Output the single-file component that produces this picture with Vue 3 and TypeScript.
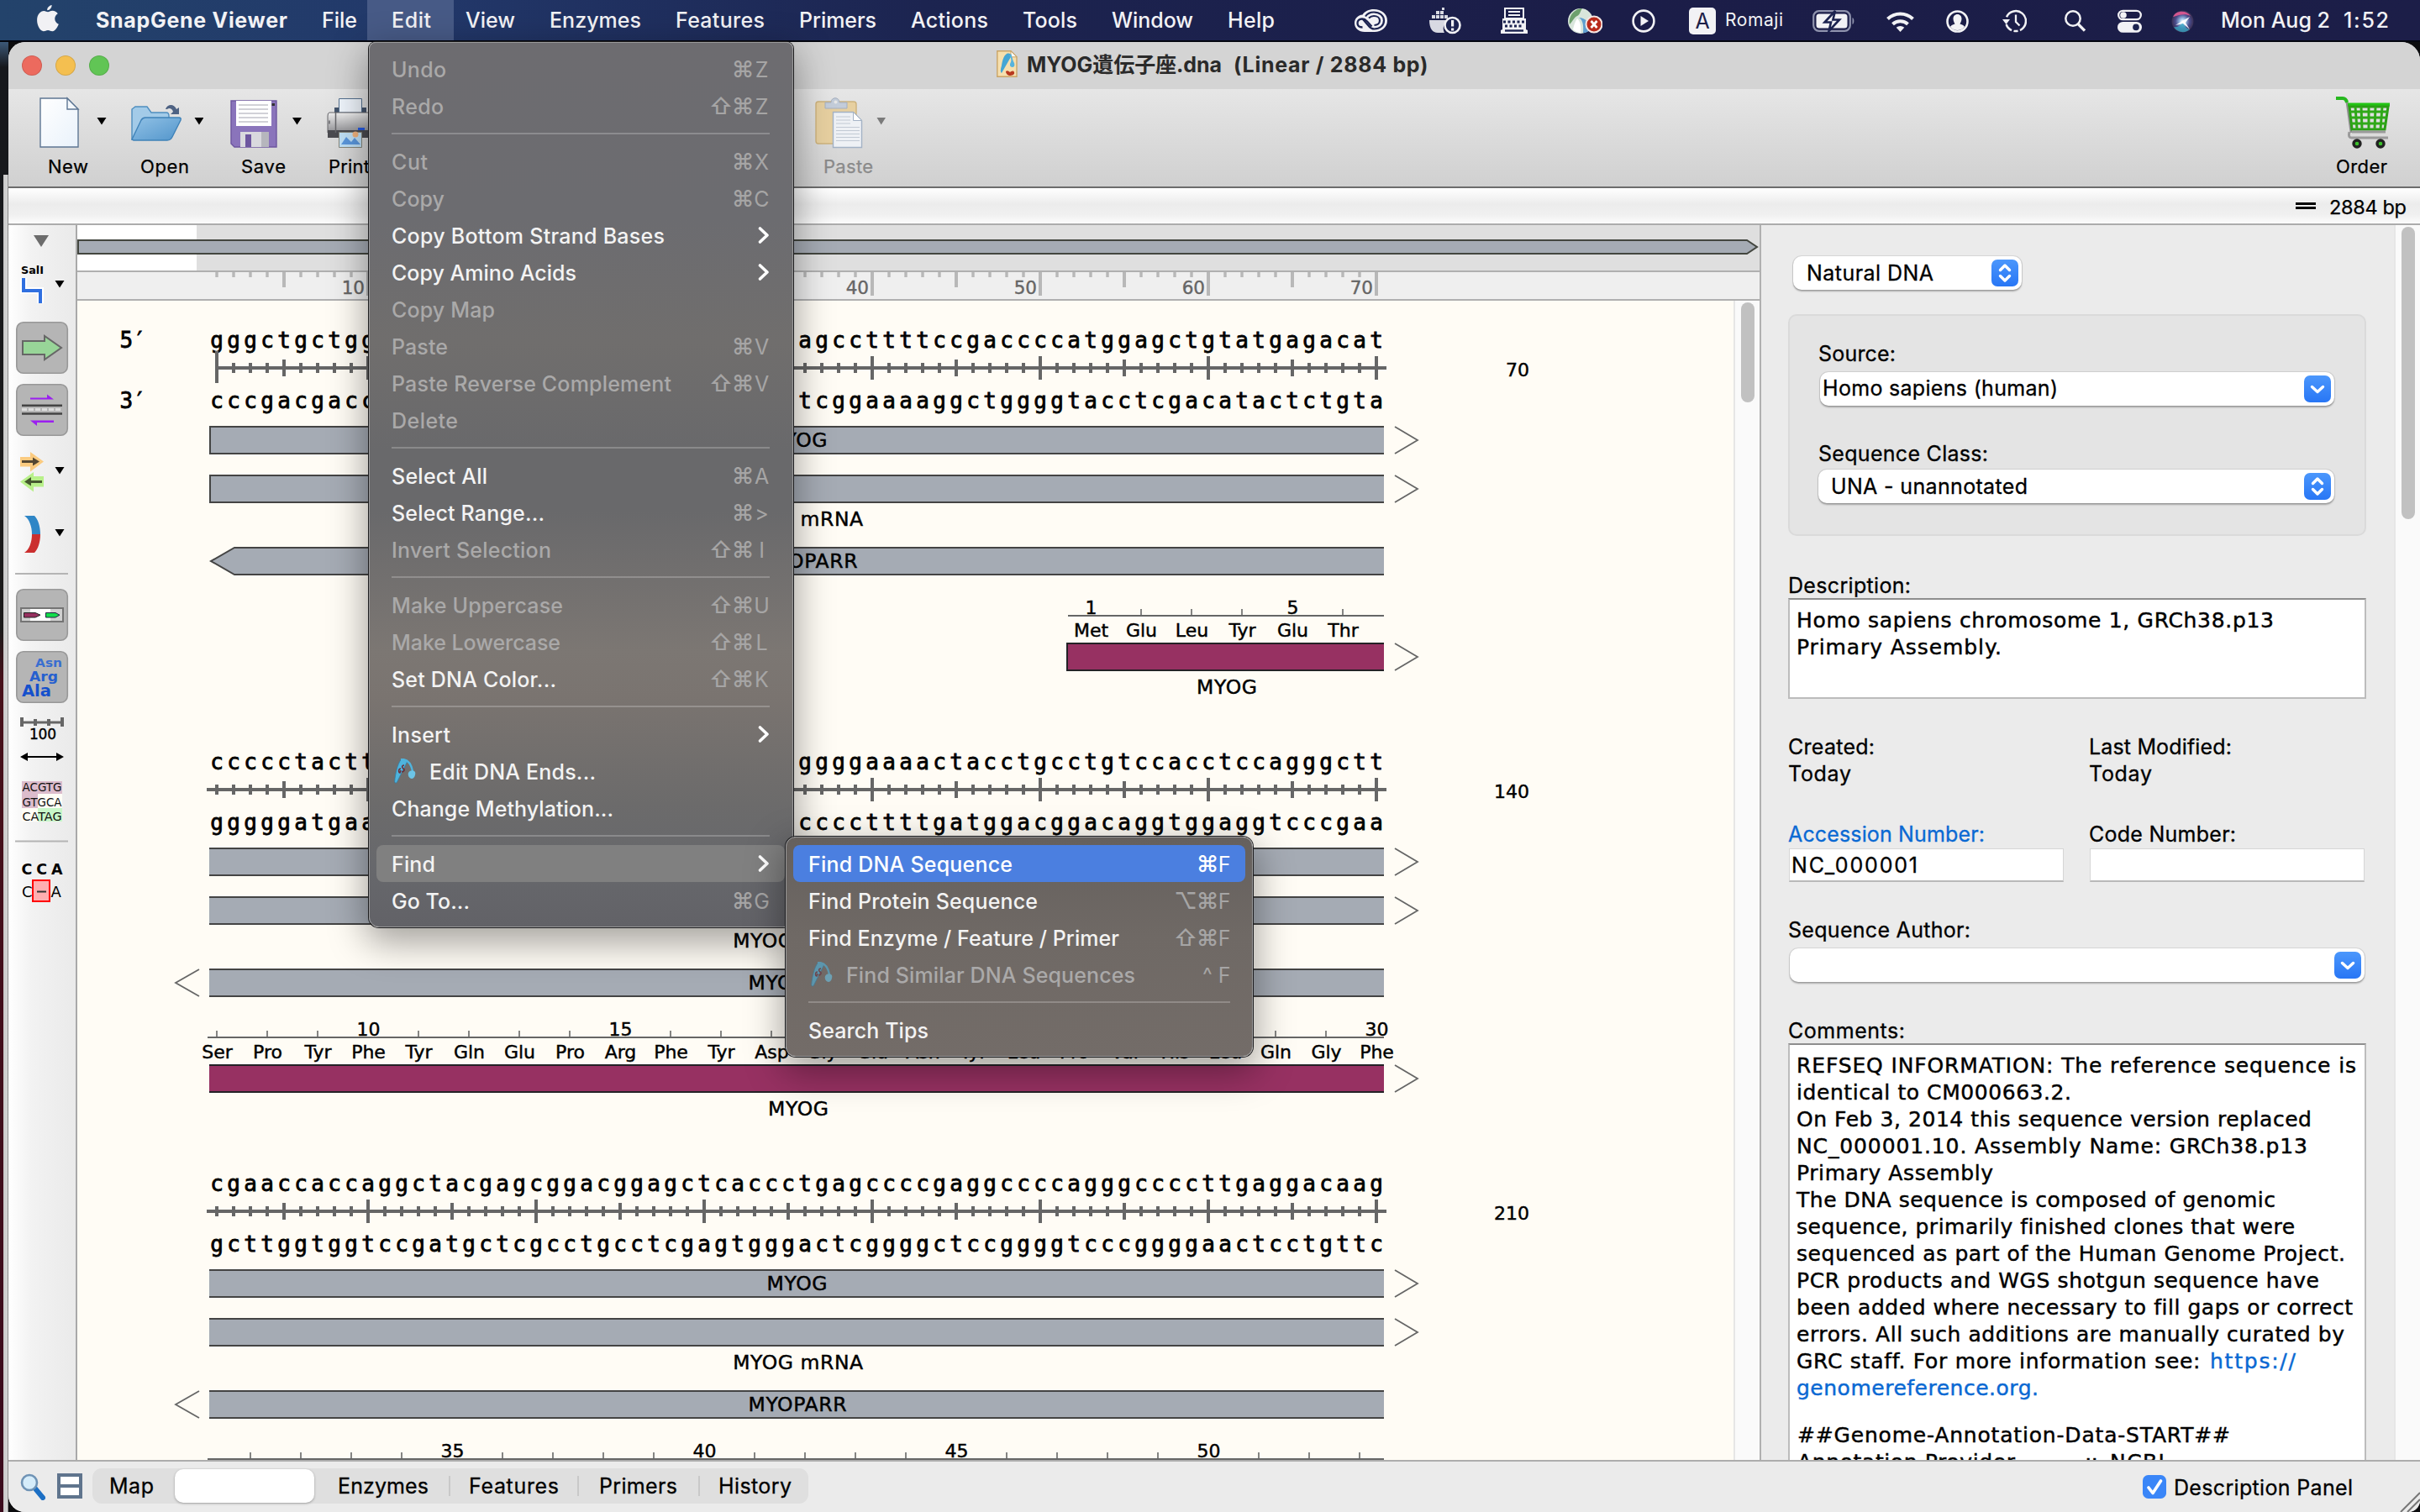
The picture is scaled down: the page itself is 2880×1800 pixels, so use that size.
<script setup lang="ts">
import type { Directive } from 'vue'

/* Spreads the letters of a label so that it spans the given width in px. */
const vFit: Directive<HTMLElement, number> = {
  mounted(el, { value }) {
    const range = document.createRange()
    range.selectNodeContents(el)
    const natural = range.getBoundingClientRect().width
    const count = Math.max(1, (el.textContent ?? '').trim().length - 1)
    const target = value + 2
    el.style.letterSpacing = `${((target - natural) / count).toFixed(3)}px`
    el.style.width = `${target}px`
  },
}

/* ---------- menu bar ---------- */
const menus = [
  { name: 'File', w: 40 }, { name: 'Edit', w: 45, open: true }, { name: 'View', w: 57 },
  { name: 'Enzymes', w: 107 }, { name: 'Features', w: 104 }, { name: 'Primers', w: 90 },
  { name: 'Actions', w: 90 }, { name: 'Tools', w: 63 }, { name: 'Window', w: 95 }, { name: 'Help', w: 54 },
]

interface Item {
  label?: string
  w?: number
  keys?: string[]
  off?: boolean
  sub?: boolean
  icon?: boolean
  active?: boolean
}
const sep: Item = {}
const editMenu: Item[] = [
  { label: 'Undo', w: 63, keys: ['⌘', 'Z'], off: true },
  { label: 'Redo', w: 60, keys: ['⇧', '⌘', 'Z'], off: true },
  sep,
  { label: 'Cut', w: 41, keys: ['⌘', 'X'], off: true },
  { label: 'Copy', w: 61, keys: ['⌘', 'C'], off: true },
  { label: 'Copy Bottom Strand Bases', w: 323, sub: true },
  { label: 'Copy Amino Acids', w: 218, sub: true },
  { label: 'Copy Map', w: 121, off: true },
  { label: 'Paste', w: 65, keys: ['⌘', 'V'], off: true },
  { label: 'Paste Reverse Complement', w: 331, keys: ['⇧', '⌘', 'V'], off: true },
  { label: 'Delete', w: 77, off: true },
  sep,
  { label: 'Select All', w: 112, keys: ['⌘', 'A'] },
  { label: 'Select Range...', w: 180, keys: ['⌘', '>'] },
  { label: 'Invert Selection', w: 188, keys: ['⇧', '⌘', 'I'], off: true },
  sep,
  { label: 'Make Uppercase', w: 202, keys: ['⇧', '⌘', 'U'], off: true },
  { label: 'Make Lowercase', w: 199, keys: ['⇧', '⌘', 'L'], off: true },
  { label: 'Set DNA Color...', w: 194, keys: ['⇧', '⌘', 'K'] },
  sep,
  { label: 'Insert', w: 68, sub: true },
  { label: 'Edit DNA Ends...', w: 196, icon: true },
  { label: 'Change Methylation...', w: 262 },
  sep,
  { label: 'Find', w: 50, sub: true, active: true },
  { label: 'Go To...', w: 91, keys: ['⌘', 'G'] },
]
const findMenu: Item[] = [
  { label: 'Find DNA Sequence', w: 241, keys: ['⌘', 'F'], active: true },
  { label: 'Find Protein Sequence', w: 271, keys: ['⌥', '⌘', 'F'] },
  { label: 'Find Enzyme / Feature / Primer', w: 368, keys: ['⇧', '⌘', 'F'] },
  { label: 'Find Similar DNA Sequences', w: 342, keys: ['^', 'F'], off: true, icon: true },
  sep,
  { label: 'Search Tips', w: 141 },
]

/* ---------- sequence map ---------- */
const PITCH = 20
const X0 = 258
const LEFT = 249
const RIGHT = 1647
const colX = (i: number) => X0 + PITCH * (i - 1)
const positions = Array.from({ length: 70 }, (_, i) => i + 1)
const pair: Record<string, string> = { a: 't', t: 'a', g: 'c', c: 'g' }
const complement = (s: string) => [...s].map((c) => pair[c]).join('')

interface Residue { x: number; name?: string; num?: number }
interface Row { top: string; end: number; first: boolean; aminoFrom: number; residues: Residue[]; aa: boolean }

const residues = (names: string[], firstNum: number, firstX: number): Residue[] =>
  names.map((name, i) => {
    const n = firstNum + i
    return { x: firstX + 60 * i, name, num: n === 1 || n % 5 === 0 ? n : undefined }
  })

const rows: Row[] = [
  {
    top: 'gggctgctgg' + 'gctggcgcagggcaagctgcagaca' + 'agccttttccgaccccatggagctgtatgagacat',
    end: 70, first: true, aminoFrom: 1271, aa: true,
    residues: residues(['Met', 'Glu', 'Leu', 'Tyr', 'Glu', 'Thr'], 1, 1298),
  },
  {
    top: 'ccccctactt' + 'cctgcagggcaggctcaggcagcgt' + 'ggggaaaactacctgcctgtccacctccagggctt',
    end: 140, first: false, aminoFrom: 247, aa: true,
    residues: residues(
      ['Ser', 'Pro', 'Tyr', 'Phe', 'Tyr', 'Gln', 'Glu', 'Pro', 'Arg', 'Phe', 'Tyr', 'Asp', 'Gly', 'Glu', 'Asn', 'Tyr',
        'Leu', 'Pro', 'Val', 'His', 'Leu', 'Gln', 'Gly', 'Phe'], 7, 258),
  },
  {
    top: 'cgaaccaccaggctacgagcggacggagctcaccctgagccccgaggccccagggccccttgaggacaag',
    end: 210, first: false, aminoFrom: 247, aa: false,
    residues: residues(Array(23).fill(''), 31, 298),
  },
]
const tickHalf = (i: number) => (i % 10 === 0 ? 14 : i % 5 === 0 ? 10 : 6)
const rulerTick = (i: number) => (i % 10 === 0 ? 28 : i % 5 === 0 ? 18 : 6)

/* ---------- description panel ---------- */
const comments = [
  { t: 'REFSEQ INFORMATION: The reference sequence is', w: 664 },
  { t: 'identical to CM000663.2.', w: 325 },
  { t: 'On Feb 3, 2014 this sequence version replaced', w: 611 },
  { t: 'NC_000001.10. Assembly Name: GRCh38.p13', w: 606 },
  { t: 'Primary Assembly', w: 232 },
  { t: 'The DNA sequence is composed of genomic', w: 568 },
  { t: 'sequence, primarily finished clones that were', w: 591 },
  { t: 'sequenced as part of the Human Genome Project.', w: 651 },
  { t: 'PCR products and WGS shotgun sequence have', w: 620 },
  { t: 'been added where necessary to fill gaps or correct', w: 660 },
  { t: 'errors. All such additions are manually curated by', w: 650 },
]
</script>

<template>
  <div class="screen">
    <!-- system menu bar -->
    <header class="menubar">
      <svg class="apple" width="26" height="32" viewBox="0 0 26 32">
        <path d="M17.6 0c.3 2.900-2.400 6.300-5.400 6.200C11.900 3.400 14.700.4 17.600 0zM13 8.300c1.400 0 2.800-1.500 5.500-1.500 2.500 0 4.900 1.200 6.300 3.400-5.200 3-4.500 10.400 1 12.600-1.100 3-3.900 8.400-7.400 8.400-2.200 0-2.900-1.300-5.300-1.300s-3.300 1.300-5.300 1.300C3.900 31.200.1 24.500.1 18.100.1 11 4.300 7 8.200 7c2.100 0 3.600 1.300 4.800 1.300z" fill="#f1f1f4" />
      </svg>
      <nav class="menus">
        <span v-fit="226" class="appname">SnapGene Viewer</span>
        <span v-for="m in menus" :key="m.name" v-fit="m.w" :class="{ open: m.open }">{{ m.name }}</span>
      </nav>
      <div class="tray">
        <svg width="39" height="28" viewBox="0 0 39 28">
          <path d="M12 27C5 27 0 22.500 0 16.500 0 11 4 7 9.500 6.500 12 2.500 17 0 23 0c9 0 16 5.500 16 13.500S32 27 24 27z" fill="#f2f2f5" />
          <path d="M9.500 21.500c-4 0-6-2.200-6-5s2-5 5.500-5c2.500 0 4 .8 6 3l5.500 6" fill="none" stroke="#1c2350" stroke-width="2.300" />
          <path d="M13 8.500c2-3 5.500-5 10-5 7 0 12 4 12 10s-5 10-11.500 10c-3 0-5-1.500-7-4L10 12" fill="none" stroke="#1c2350" stroke-width="2.200" />
          <path d="M17 10.500c2-1.800 4-2.500 6-2.500 4 0 7 2.300 7 5.500S27.500 19 23.500 19" fill="none" stroke="#1c2350" stroke-width="2.200" />
        </svg>
        <svg class="m50" width="38" height="32" viewBox="0 0 38 32" fill="#d8d9e2">
          <path d="M0 15h23a11 11 0 0 0-5 15H10C4 30 0 25 0 15z" />
          <path d="M3 9h4v4H3zM8 9h4v4H8zM13 9h4v4h-4zM18 9h4v4h-4zM8 4h4v4H8zM13 4h4v4h-4zM15 0h3v3h-3z" />
          <circle cx="27.500" cy="21" r="9" fill="#1c2350" stroke="#f2f2f5" stroke-width="2.600" />
          <path d="M26 15h3.200v7.500H26zM26 24.500h3.200v3H26z" fill="#f2f2f5" />
        </svg>
        <svg class="m47" width="32" height="32" viewBox="0 0 32 32">
          <path d="M5 1h22v12H5z" fill="none" stroke="#f2f2f5" stroke-width="2" />
          <path d="M9 5h14M9 9h14" stroke="#f2f2f5" stroke-width="1.800" />
          <path d="M2 13h28v13l2 1v4H0v-4l2-1z" fill="#f2f2f5" />
          <path d="M3 17h26M5 22h22" stroke="#1c2350" stroke-width="3" stroke-dasharray="3 2.500" />
          <path d="M5 27.500h22" stroke="#1c2350" stroke-width="2.400" />
        </svg>
        <svg class="m47" width="42" height="32" viewBox="0 0 42 32">
          <circle cx="16" cy="16" r="15" fill="#d9e6dc" />
          <path d="M3 20C1 10 9 1 18 1c-3 4-2 7-6 9s-5 6-9 10z" fill="#6da06d" />
          <path d="M14 12c4 2 6 8 5 18 4 0 8-2 10-6-2-6-8-12-15-12z" fill="#5f9fd0" />
          <path d="M12 13c4 4 5 10 4 17-3 0-7-2-9-4 1-4 2-9 5-13z" fill="#fff" />
          <circle cx="32" cy="20" r="9.500" fill="#b92b1c" stroke="#f6e7e4" stroke-width="2" />
          <path d="M28.500 16l7 8M35.500 16l-7 8" stroke="#fff" stroke-width="2.800" />
        </svg>
        <svg class="m35" width="28" height="28" viewBox="0 0 28 28">
          <circle cx="14" cy="14" r="12.400" fill="none" stroke="#f2f2f5" stroke-width="2.600" />
          <path d="M10.500 8v12L20 14z" fill="#f2f2f5" />
        </svg>
        <span class="abox m40">A</span>
        <span v-fit="67" class="romaji">Romaji</span>
        <svg class="m35" width="51" height="26" viewBox="0 0 51 26">
          <rect x="1.200" y="1.200" width="43.600" height="23.600" rx="6.500" fill="none" stroke="#8f93ad" stroke-width="2.200" />
          <path d="M47.500 9c2.500 1 2.500 7 0 8z" fill="#8f93ad" />
          <rect x="4.500" y="4.500" width="37" height="17" rx="3.500" fill="#f2f2f5" />
          <path d="M27 1L14.500 14.500H22L19.500 25 32 11.500h-7.600z" fill="#f2f2f5" stroke="#1c2350" stroke-width="2.600" />
        </svg>
        <svg class="m37" width="33" height="25" viewBox="0 0 33 25" fill="none" stroke="#f2f2f5" stroke-width="4">
          <path d="M1.500 9.500a21.500 21.500 0 0 1 30 0" />
          <path d="M7.500 15.800a13 13 0 0 1 18 0" />
          <path d="M11.700 19.800a7 7 0 0 1 9.600 0L16.500 25z" fill="#f2f2f5" stroke="none" />
        </svg>
        <svg class="m38" width="27" height="27" viewBox="0 0 27 27">
          <circle cx="13.500" cy="13.500" r="12" fill="none" stroke="#f2f2f5" stroke-width="2.600" />
          <path d="M13.500 5c3 0 5 2.300 5 5.300s-1.500 5-2 6.200c3 .8 5 2 5.500 3.500A11 11 0 0 1 13.500 24 11 11 0 0 1 5 20c.5-1.500 2.500-2.700 5.500-3.500-.5-1.200-2-3.200-2-6.200S10.500 5 13.500 5z" fill="#f2f2f5" />
        </svg>
        <svg class="m40" width="29" height="28" viewBox="0 0 29 28">
          <path d="M5 9.200A12 12 0 1 1 4.600 18" fill="none" stroke="#f2f2f5" stroke-width="2.500" stroke-dasharray="46 2.500 5 2.500" />
          <path d="M0 12h9l-4.500 6z" fill="#f2f2f5" />
          <path d="M16 6.500V15l4.500 4.500" fill="none" stroke="#f2f2f5" stroke-width="2.300" />
        </svg>
        <svg class="m45" width="25" height="26" viewBox="0 0 25 26" fill="none" stroke="#f2f2f5">
          <circle cx="10" cy="10" r="8.700" stroke-width="2.500" />
          <path d="M16 16.500l8 8" stroke-width="3.200" />
        </svg>
        <svg class="m38" width="29" height="28" viewBox="0 0 29 28">
          <rect x="1.200" y="1.800" width="26.600" height="10.400" rx="5.200" fill="none" stroke="#f2f2f5" stroke-width="2.300" />
          <circle cx="7" cy="7" r="3.800" fill="#f2f2f5" />
          <rect x="0" y="15" width="29" height="12.800" rx="6.400" fill="#f2f2f5" />
          <circle cx="22" cy="21.400" r="3.800" fill="#1c2350" />
        </svg>
        <svg class="m35" width="27" height="27" viewBox="0 0 27 27">
          <defs>
            <radialGradient id="siri" cx=".5" cy=".5" r=".5">
              <stop offset="0" stop-color="#fff" />
              <stop offset=".25" stop-color="#9fc4e8" />
              <stop offset=".65" stop-color="#4a4c8c" />
              <stop offset="1" stop-color="#3a2f52" />
            </radialGradient>
          </defs>
          <circle cx="13.500" cy="13.500" r="13" fill="url(#siri)" />
          <path d="M2 8c4-8 16-8 21-1-6-3-12-2-21 1z" fill="#d3568f" />
          <path d="M3 20c5 1 8-2 11-6 1 5 4 8 8 9-5 5-15 4-19-3z" fill="#38a9c4" opacity=".75" />
          <path d="M13 13l9-5-5 7 5 8-8-7-9 2z" fill="#fff" opacity=".9" />
        </svg>
        <span v-fit="128" class="m33">Mon Aug 2</span>
        <span v-fit="52" class="clock">1:52</span>
      </div>
    </header>

    <div class="desktop">
      <div class="behind"></div>
      <main class="window">
        <!-- title bar -->
        <div class="titlebar">
          <div class="lights"><i class="red"></i><i class="yellow"></i><i class="green"></i></div>
          <div class="title">
            <svg width="25" height="32" viewBox="0 0 25 32">
              <path d="M.8.800H17l7 7v23.400H.8z" fill="#f6dfae" stroke="#c9a468" stroke-width="1.400" />
              <path d="M17 .8v7h7z" fill="#fff" stroke="#c9a468" />
              <path d="M12 4c3-1 5 0 6 2L6 27c-2-2-1-5 0-9 1-6 2-11 6-14z" fill="#45a6d4" />
              <path d="M17 5c2 3 2 6 3 8 2 3 2 7-1 7s-4-3-2-6c1-3 0-6-2-8z" fill="#56b3dd" />
              <path d="M11 25c2-2 4 0 5 1 1-1 4-3 5 0s-3 4-5 4-5-2-5-5z" fill="#b8391f" />
            </svg>
            <span v-fit="230" class="fname">MYOG遺伝子座.dna</span>
            <span v-fit="229">(Linear / 2884 bp)</span>
          </div>
        </div>

        <!-- toolbar -->
        <div class="toolbar">
          <div class="tool new">
            <svg width="80" height="64" viewBox="47 114 80 64">
              <defs>
                <linearGradient id="paper" x1="0" y1="0" x2="1" y2="1"><stop offset="0" stop-color="#fff" /><stop offset="1" stop-color="#e9f2fb" /></linearGradient>
              </defs>
              <path d="M48 117h32l13 13v45H48z" fill="url(#paper)" stroke="#5d7693" stroke-width="1.400" />
              <path d="M80 117v13h13z" fill="#f4f8fc" stroke="#5d7693" stroke-width="1.400" />
              <path d="M115.500 140h11l-5.500 8.500z" />
            </svg>
            <span v-fit="46">New</span>
          </div>
          <div class="tool folder">
            <svg width="86" height="64" viewBox="156 114 86 64">
              <defs>
                <linearGradient id="fold" x1="0" y1="0" x2="1" y2="1"><stop offset="0" stop-color="#92c2e6" /><stop offset="1" stop-color="#5295cb" /></linearGradient>
              </defs>
              <path d="M157 166v-36l4-3h14l5 7h18q3 0 3 4v28z" fill="#a3cbe8" stroke="#4f8ebf" stroke-width="1.400" />
              <path d="M157 166l11-23q2-3 5-3h40q3 0 2 3l-10 20q-2 4-6 4h-40z" fill="url(#fold)" stroke="#3f82b8" stroke-width="1.400" />
              <path d="M197 130c2-6 10-7 13 0l3-2v8h-10l3-3c-1-4-5-5-7-3z" fill="#4e6283" />
              <path d="M231.500 140h11l-5.500 8.500z" />
            </svg>
            <span v-fit="56">Open</span>
          </div>
          <div class="tool disk">
            <svg width="86" height="64" viewBox="273 114 86 64">
              <path d="M275 120h54v55h-50l-4-4z" fill="#8a74bb" stroke="#6d569f" stroke-width="1.400" />
              <path d="M281 120h42v30h-42z" fill="#fff" />
              <path d="M284 125h35M284 130h35M284 135h35M284 140h35M284 145h35" stroke="#c2c2ca" stroke-width="1.400" />
              <path d="M323.500 123h3.500v3h-3.500z" fill="#333" />
              <path d="M286 157h34v18h-34z" fill="#d9d9de" />
              <path d="M292 160h7v15h-7z" fill="#6d569f" />
              <path d="M311 157h9v18h-9z" fill="#b6b6bd" />
              <path d="M348 140h11l-5.500 8.500z" />
            </svg>
            <span v-fit="51">Save</span>
          </div>
          <div class="tool print">
            <svg width="58" height="64" viewBox="389 114 58 64">
              <defs>
                <linearGradient id="prn" x1="0" y1="0" x2="0" y2="1"><stop offset="0" stop-color="#efefef" /><stop offset="1" stop-color="#8f8f93" /></linearGradient>
              </defs>
              <path d="M398 128h38v8h-38z" fill="#44546b" />
              <path d="M403.500 117.500h27V134h-27z" fill="#eef4fb" stroke="#54708f" />
              <path d="M392 134h50q4 0 4 4v20h-56v-20q0-4 2-4z" fill="url(#prn)" stroke="#66666a" />
              <path d="M390 155h56v9h-56z" fill="#4b4b50" />
              <path d="M392 143.500v4M399.500 134v24" stroke="#66666a" stroke-width="1.500" />
              <path d="M426 152h8v3h-8z" fill="#2459e0" />
              <path d="M403.500 157.500h27v18h-27z" fill="#bfe0f6" stroke="#87877a" />
              <path d="M406 172l6-9 6 6 4-5 7 8z" fill="#5a97dd" />
              <circle cx="423" cy="160" r="3.500" fill="#f1b27c" />
            </svg>
            <span v-fit="47">Print</span>
          </div>
          <div class="tool paste">
            <svg width="86" height="64" viewBox="970 114 86 64">
              <rect x="971" y="121" width="48" height="50" rx="3" fill="#e7d0a0" stroke="#cdb27c" stroke-width="1.400" />
              <path d="M982 129v-7h7c0-7 10-7 10 0h9v7z" fill="#c3ccd9" stroke="#a5afbf" />
              <circle cx="994.500" cy="121.500" r="2" fill="#e7e7e7" />
              <path d="M991.500 133.500h24l10 10v32h-34z" fill="#eef1f5" stroke="#a3b2c5" stroke-width="1.400" />
              <path d="M1015.500 133.500v10h10z" fill="#fff" stroke="#a3b2c5" />
              <path d="M995 139h17M995 143h17M995 147h17M995 151.500h28M995 155.500h28M995 159.500h28M995 163.500h28M995 167.500h28" stroke="#c2cad4" stroke-width="1.200" />
              <path d="M1043.500 140h10.500l-5.300 8.500z" fill="#7a7a7a" />
            </svg>
            <span v-fit="57">Paste</span>
          </div>
          <div class="tool order">
            <svg width="66" height="64" viewBox="2780 114 66 64">
              <path d="M2781 117h8q3 0 4 5l5 36" fill="none" stroke="#8f8f8f" stroke-width="2.600" />
              <path d="M2780 117h8q4 0 5 5" fill="none" stroke="#27b81f" stroke-width="4" />
              <path d="M2794 122.500h50v4h-50z" fill="#23c415" />
              <path d="M2796 127h46l-4 27h-39z" fill="none" stroke="#2b9d16" stroke-width="3" />
              <path d="M2796 133h45M2797 140h43M2798 147h41M2803 127l2 27M2810 127l1 27M2819 127v27M2827 127l-1 27M2835 127l-2 27" stroke="#2fa818" stroke-width="3" />
              <path d="M2799 157h40M2796 157q-2 8 4 7h42" fill="none" stroke="#9a9a9a" stroke-width="3" />
              <g fill="#3bbf2b" stroke="#222" stroke-width="3.400"><circle cx="2805" cy="171" r="4" /><circle cx="2833" cy="171" r="4" /></g>
            </svg>
            <span v-fit="59">Order</span>
          </div>
        </div>

        <div class="lengthbar">
          <i class="dsicon"></i>
          <span v-fit="90">2884 bp</span>
        </div>

        <div class="body">
          <!-- tool column -->
          <aside class="side">
            <svg width="80" height="840" viewBox="10 268 80 840" font-family="'DejaVu Sans', sans-serif">
              <path d="M40 280h18l-9 14z" fill="#6c6c6c" />
              <text x="25" y="326" font-size="12.500" font-weight="700" textLength="27" lengthAdjust="spacingAndGlyphs">SalI</text>
              <path d="M28 331v15h20v15" fill="none" stroke="#fff" stroke-width="8" />
              <path d="M28 331v15h20v15" fill="none" stroke="#2f6fe0" stroke-width="4" />
              <g><path d="M65.500 334h11l-5.500 8.500z" /><path d="M65.500 556h11l-5.500 8.500z" /><path d="M65.500 630h11l-5.500 8.500z" /></g>
              <g fill="#b5b5b5" stroke="#989898" stroke-width="1.600">
                <rect x="19.800" y="383.800" width="60.500" height="60.500" rx="8" />
                <rect x="19.800" y="457.800" width="60.500" height="60.500" rx="8" />
                <rect x="19.800" y="701.800" width="60.500" height="60.500" rx="8" />
                <rect x="19.800" y="775.800" width="60.500" height="60.500" rx="8" />
              </g>
              <path d="M27 406h26v-6l20 14-20 14v-6H27z" fill="#98d598" stroke="#666" stroke-width="2" />
              <path d="M36 475.500h28l-8-6v4H36z" fill="#9b1ff0" />
              <path d="M26 482.800h48M26 492.500h48" stroke="#444" stroke-width="2.400" />
              <path d="M26 487.600h48" stroke="#ddd" stroke-width="3" stroke-dasharray="6 2" />
              <path d="M64 500.500H36l8 6.500v-4h20z" fill="#9b1ff0" />
              <path d="M24 544h12v-6l16 11.500-16 12v-6H24z" fill="#fbcb80" />
              <path d="M26 548h13v-3.500l8 5-8 5V551H26z" fill="#544732" />
              <path d="M52 567H40v-5l-16 11.500 16 12v-6h12z" fill="#b8f08a" />
              <path d="M50 572H37v-4l-8 5.500 8 5V575h13z" fill="#45592f" />
              <path d="M29 614h12c4 4 7 12 7 22H38c0-9-3-18-9-22z" fill="#2f86c6" />
              <path d="M29 658h12c4-4 7-12 7-22H38c0 9-3 18-9 22z" fill="#cb2f2f" />
              <path d="M18 683h63M18 1001.500h63" stroke="#b4b4b4" stroke-width="2" />
              <rect x="25" y="724" width="50" height="16" fill="#d0d0d0" stroke="#747474" stroke-width="2" />
              <path d="M36 725h24v14H36z" fill="#fff" />
              <path d="M28.500 729.500H42l6 2.700-6 2.800H28.500z" fill="#96305f" stroke="#222" />
              <path d="M54.500 729.500H66l5 2.700-5 2.800H54.500z" fill="#12dc4a" stroke="#224" />
              <g font-weight="700" fill="#1550cc">
                <text x="42" y="794" font-size="14.500" fill="#3a6ed0" textLength="32" lengthAdjust="spacingAndGlyphs">Asn</text>
                <text x="35" y="811" font-size="16.500" fill="#2760cf" textLength="34" lengthAdjust="spacingAndGlyphs">Arg</text>
                <text x="26" y="829" font-size="19" textLength="35" lengthAdjust="spacingAndGlyphs">Ala</text>
              </g>
              <path d="M26 854v11M74 854v11M42 856v8M58 856v8" stroke="#666" stroke-width="4" />
              <path d="M26 860h48" stroke="#666" stroke-width="3" />
              <text x="35" y="879.600" font-size="17" textLength="32" stroke="#000" stroke-width=".4">100</text>
              <path d="M28 901h44" stroke="#000" stroke-width="2" />
              <path d="M24 901l9-5v10zM76 901l-9-5v10z" />
              <path d="M26 930h48v15H26zM26 945h19v17H26z" fill="#dcbccc" />
              <path d="M45 945h29v17H45zM26 962h19v16H26z" fill="#fffdf6" />
              <path d="M45 962h29v16H45z" fill="#c8f6c8" />
              <g font-size="14" fill="#111">
                <text x="26.500" y="942" textLength="47" lengthAdjust="spacingAndGlyphs">ACGTG</text>
                <text x="26.500" y="959.500" textLength="47" lengthAdjust="spacingAndGlyphs">GTGCA</text>
                <text x="26.500" y="977" textLength="47" lengthAdjust="spacingAndGlyphs">CATAG</text>
              </g>
              <text x="25.500" y="1040.500" font-size="17.500" font-weight="700" textLength="49">CCA</text>
              <text x="26" y="1067.500" font-size="18">C</text>
              <text x="60.500" y="1067.500" font-size="18">A</text>
              <rect x="39" y="1048" width="20" height="25" fill="#ffaeb0" stroke="#f00" stroke-width="2" />
              <path d="M44 1061.500h11" stroke="#333" stroke-width="2" />
            </svg>
          </aside>

          <!-- sequence view -->
          <section class="center">
            <svg class="overview" width="2002" height="90" viewBox="92 268 2002 90" font-family="'DejaVu Sans', sans-serif">
              <path d="M92 268h2002v54H92z" fill="#dfdfdf" />
              <path d="M92 268h142v54H92z" fill="#fff" />
              <path d="M93 286h1986l12 8-12 8H93z" fill="#a5abb4" stroke="#43463f" stroke-width="2" />
              <path d="M92 322h2002v2H92zM92 356h2002v2H92z" fill="#b0b0b0" />
              <path d="M92 324h2002v32H92z" fill="#efefef" />
              <path v-for="i in positions" :key="i" :d="`M${colX(i)} 324v${rulerTick(i)}`" stroke="#b8b8b8" :stroke-width="i % 5 ? 3.400 : 4" />
              <text v-for="n in 7" :key="n" :x="colX(n * 10) - 4" y="349.800" text-anchor="end" font-size="21.500" fill="#666" stroke="#666" stroke-width=".4">{{ n * 10 }}</text>
            </svg>
            <div class="seqwrap">
              <div class="seq">
                <svg v-for="(r, k) in rows" :key="k" class="row" width="1970" height="502" viewBox="92 358 1970 502" font-family="'DejaVu Sans', sans-serif" font-size="23.500">
                  <g class="mono" font-size="26">
                    <template v-if="r.first">
                      <text x="142.500" y="414" class="prime">5′</text>
                      <text x="142.500" y="486" class="prime">3′</text>
                    </template>
                    <text x="250.200" y="414">{{ r.top }}</text>
                    <text x="250.200" y="486">{{ complement(r.top) }}</text>
                  </g>
                  <path :d="`M${r.first ? 256 : 246} 438H1650`" stroke="#666" stroke-width="4" />
                  <path v-for="i in positions" :key="i" :d="`M${colX(i)} ${438 - tickHalf(i)}v${tickHalf(i) * 2}`" stroke="#666" stroke-width="4" />
                  <path v-if="r.first" d="M258 418v38" stroke="#666" stroke-width="4" />
                  <text x="1820" y="448" text-anchor="end" font-size="22">{{ r.end }}</text>

                  <g v-for="y in [507, 565]" :key="y">
                    <path :d="`M${LEFT} ${y}H${RIGHT}v34H${LEFT}z`" fill="#a5abb4" />
                    <path :d="r.first ? `M${RIGHT} ${y + 1}H${LEFT + 1}v32H${RIGHT}` : `M${LEFT} ${y + 1}H${RIGHT}M${LEFT} ${y + 33}H${RIGHT}`" fill="none" stroke="#444" stroke-width="2" />
                    <path :d="`M1660 ${y + 1}l27 16-27 16`" fill="none" stroke="#666" stroke-width="1.800" />
                  </g>
                  <text x="948.500" y="531.500" text-anchor="middle" textLength="72">MYOG</text>
                  <text x="949.700" y="626" text-anchor="middle" textLength="155">MYOG mRNA</text>
                  <path v-if="r.first" :d="`M${RIGHT} 652H279l-28 16 28 16H${RIGHT}`" fill="#a5abb4" stroke="#444" stroke-width="2" />
                  <g v-else>
                    <path :d="`M${LEFT} 651H${RIGHT}v34H${LEFT}z`" fill="#a5abb4" />
                    <path :d="`M${LEFT} 652H${RIGHT}M${LEFT} 684H${RIGHT}`" stroke="#444" stroke-width="2" />
                    <path d="M237 652l-28 16 28 16" fill="none" stroke="#666" stroke-width="1.800" />
                  </g>
                  <text :x="r.first ? 962 : 949" y="676" text-anchor="middle" textLength="117">MYOPARR</text>

                  <path :d="`M${r.aminoFrom} 733H${RIGHT}`" stroke="#666" stroke-width="2" />
                  <g v-for="a in r.residues" :key="a.x" font-size="22">
                    <path v-if="!a.num" :d="`M${a.x} 725v8`" stroke="#666" stroke-width="1.600" />
                    <text v-else :x="a.x + .5" y="731" text-anchor="middle">{{ a.num }}</text>
                    <text v-if="a.name" :x="a.x + .5" y="758" text-anchor="middle">{{ a.name }}</text>
                  </g>
                  <g v-if="r.aa">
                    <path :d="`M${r.first ? 1269 : LEFT} 765H${RIGHT}v34H${r.first ? 1269 : LEFT}z`" fill="#973162" />
                    <path :d="r.first ? `M${RIGHT} 766H1270v32H${RIGHT}` : `M${LEFT} 766H${RIGHT}M${LEFT} 798H${RIGHT}`" fill="none" stroke="#242226" stroke-width="2" />
                    <path d="M1660 766l27 16-27 16" fill="none" stroke="#666" stroke-width="1.800" />
                    <text :x="r.first ? 1460 : 950" y="826" text-anchor="middle" textLength="72">MYOG</text>
                  </g>
                </svg>
              </div>
              <div class="track"><i class="thumb"></i></div>
            </div>
          </section>

          <!-- description panel -->
          <section class="panel">
            <div class="form">
              <div class="select natural"><span v-fit="149">Natural DNA</span><b class="step"><svg width="32" height="32" viewBox="0 0 32 32"><path d="M10.500 12.500l5.500-5.500 5.500 5.500M10.500 19.500l5.500 5.500 5.500-5.500" /></svg></b></div>
              <div class="group">
                <div class="label"><span v-fit="90">Source:</span></div>
                <div class="select combo1"><span v-fit="278">Homo sapiens (human)</span><b class="step"><svg width="32" height="32" viewBox="0 0 32 32"><path d="M9.500 13.500l6.500 6 6.500-6" /></svg></b></div>
                <div class="label second"><span v-fit="200">Sequence Class:</span></div>
                <div class="select combo2"><span v-fit="232">UNA - unannotated</span><b class="step"><svg width="32" height="32" viewBox="0 0 32 32"><path d="M10.500 12.500l5.500-5.500 5.500 5.500M10.500 19.500l5.500 5.500 5.500-5.500" /></svg></b></div>
              </div>
              <div class="label desc"><span v-fit="144">Description:</span></div>
              <div class="textbox short">
                <div><span v-fit="566">Homo sapiens chromosome 1, GRCh38.p13</span></div>
                <div><span v-fit="242">Primary Assembly.</span></div>
              </div>
              <div class="cols dates">
                <div><div class="label"><span v-fit="101">Created:</span></div><div class="label"><span v-fit="73">Today</span></div></div>
                <div><div class="label"><span v-fit="168">Last Modified:</span></div><div class="label"><span v-fit="73">Today</span></div></div>
              </div>
              <div class="cols nums">
                <div><div class="label blue"><span v-fit="232">Accession Number:</span></div><div class="input"><span v-fit="148">NC_000001</span></div></div>
                <div><div class="label"><span v-fit="173">Code Number:</span></div><div class="input"></div></div>
              </div>
              <div class="label author"><span v-fit="215">Sequence Author:</span></div>
              <div class="select combo3"><span></span><b class="step"><svg width="32" height="32" viewBox="0 0 32 32"><path d="M9.500 13.500l6.500 6 6.500-6" /></svg></b></div>
              <div class="label comm"><span v-fit="137">Comments:</span></div>
              <div class="textbox long">
                <div v-for="c in comments" :key="c.t"><span v-fit="c.w">{{ c.t }}</span></div>
                <div class="split"><span v-fit="480">GRC staff. For more information see:</span><span v-fit="100" class="blue">https://</span></div>
                <div class="blue"><span v-fit="286">genomereference.org.</span></div>
                <div class="meta"><span v-fit="513">##Genome-Annotation-Data-START##</span></div>
                <div class="provider"><span v-fit="257">Annotation Provider</span><span v-fit="14">::</span><span v-fit="63">NCBI</span></div>
              </div>
            </div>
            <div class="track"><i class="thumb"></i></div>
          </section>
        </div>

        <!-- bottom bar -->
        <footer class="footer">
          <svg class="lens" width="30" height="32" viewBox="0 0 30 32">
            <path d="M17 17l10 12" stroke="#1c6fc4" stroke-width="6" stroke-linecap="round" />
            <circle cx="11" cy="11" r="9" fill="#d5ecfa" stroke="#6f93b5" stroke-width="2.600" />
          </svg>
          <svg class="panes" width="30" height="30" viewBox="0 0 30 30">
            <rect x="2" y="2" width="26" height="26" fill="#fff" stroke="#5f748d" stroke-width="4" />
            <path d="M0 15h30" stroke="#5f748d" stroke-width="4" />
          </svg>
          <div class="tabs">
            <div class="tab t1"><span v-fit="51">Map</span></div>
            <div class="tab t2"></div>
            <div class="tab t3"><span v-fit="106">Enzymes</span></div>
            <div class="tab t4 line"><span v-fit="105">Features</span></div>
            <div class="tab t5 line"><span v-fit="91">Primers</span></div>
            <div class="tab t6 line"><span v-fit="85">History</span></div>
          </div>
          <div class="check">
            <svg width="28" height="28" viewBox="0 0 28 28"><rect width="28" height="28" rx="6.500" fill="#3a86f8" /><path d="M7 15l5 6.500L21.500 7" fill="none" stroke="#fff" stroke-width="3.600" stroke-linecap="round" stroke-linejoin="round" /></svg>
            <span v-fit="211">Description Panel</span>
          </div>
          <svg class="grip" width="26" height="26" viewBox="0 0 26 26"><path d="M3 26L26 3M11 26l15-15M19 26l7-7" stroke="#777" stroke-width="2" /></svg>
        </footer>
      </main>
    </div>

    <!-- open menus -->
    <div v-for="(list, k) in [editMenu, findMenu]" :key="k" class="popup" :class="k ? 'find' : 'edit'">
      <template v-for="(it, i) in list" :key="i">
        <div v-if="!it.label" class="sep"></div>
        <div v-else class="item" :class="{ off: it.off, active: it.active }">
          <svg v-if="it.icon" class="tube" width="26" height="30" viewBox="0 0 26 30">
            <path d="M8 1.500c3-1.500 6 0 7.500 2.500L3.500 28C2.500 30 .5 29 .7 27 1.500 18 4 7 8 1.500z" fill="#4fb4dd" stroke="#2e7ea6" stroke-width=".8" />
            <path d="M8 1c7-.5 12 4 14 14" fill="none" stroke="#4fb4dd" stroke-width="2.400" />
            <path d="M17 17c1-3 6-4 8-1 1 3-1 8-4 8s-5-4-4-7z" fill="#6cc4e6" />
            <path d="M8 12c-3 0-3 5-1 5l1-3M12 8c-3 0-3 3-1 4s1 4-2 4" fill="none" stroke="#6b2f3a" stroke-width="1.600" />
          </svg>
          <span v-fit="it.w ?? 0">{{ it.label }}</span>
          <svg v-if="it.sub" class="chev" width="14" height="20" viewBox="0 0 14 20"><path d="M2.500 2l8.500 8-8.500 8" /></svg>
          <span v-if="it.keys" class="keys"><i v-for="c in it.keys" :key="c" :class="{ mod: '⇧⌘⌥'.includes(c), ctrl: c === '^' }">{{ c }}</i></span>
        </div>
      </template>
    </div>
  </div>
</template>

<style>
body { margin: 0; background: #1a1a1c; overflow: hidden; }
</style>

<style scoped>
* { box-sizing: border-box; }
.screen {
  position: relative; width: 2880px; height: 1800px; overflow: hidden;
  display: flex; flex-direction: column;
  font-family: Inter, "Noto Sans CJK JP", sans-serif; font-size: 25px; color: #000;
  background: #111;
}
span { white-space: nowrap; }
svg { display: block; flex: none; }
i { font-style: normal; }

.menubar {
  height: 50px; flex: none; display: flex; align-items: flex-start;
  border-bottom: 2px solid #04060f; padding: 0 37px 0 44px;
  background: linear-gradient(90deg, #23436b 0, #22386a 500px, #1c2450 1100px, #1b1d48 1900px, #1c1e48);
  color: #f2f2f5; font-weight: 500; line-height: 48px;
}
.apple { margin-top: 6px; }
.menus { display: flex; margin-left: 44px; gap: 41px; height: 48px; }
.appname { font-weight: 700; }
.menus .open { background: #475a86; box-shadow: -29px 0 0 #475a86, 27px 0 0 #475a86; }
.tray { margin-left: auto; display: flex; align-items: center; height: 50px; }
.tray span { line-height: 48px; height: 50px; }
.m33 { margin-left: 32px; } .m35 { margin-left: 35px; } .m37 { margin-left: 37px; } .m38 { margin-left: 38px; }
.m40 { margin-left: 40px; } .m45 { margin-left: 45px; } .m47 { margin-left: 47px; } .m50 { margin-left: 50px; }
.clock { margin-left: 16px; }
.tray .abox { width: 32px; height: 32px; line-height: 33px; border-radius: 5px; background: #f2f2f5; color: #1c2048; text-align: center; font-size: 25px; font-weight: 400; }
.romaji { margin-left: 11px; font-size: 21px; font-weight: 400; }

.desktop { flex: 1; display: flex; min-height: 0; background: #0c0c0e; }
.behind {
  width: 10px; flex: none;
  background:
    linear-gradient(90deg, transparent 4px, #c9c9c9 4px, #d4d4d4 9px, #8a8a8a 9px) 0 158px / 10px 1592px no-repeat,
    linear-gradient(180deg, #3c5878 0, #16181c 30px, #1c1b1b 700px, #47101a 760px, #3a0a1c 1750px);
}
.window {
  flex: 1; min-width: 0; display: flex; flex-direction: column; overflow: hidden;
  border-radius: 20px 22px 14px 20px; background: #ebebeb;
}
.titlebar { height: 56px; flex: none; background: #d4d4d4; display: flex; align-items: flex-start; }
.lights { display: flex; gap: 16px; margin: 16px 0 0 16px; }
.lights i { width: 24px; height: 24px; border-radius: 50%; border: 1px solid rgba(0, 0, 0, .12); }
.red { background: #ec6a5e; } .yellow { background: #f4bf50; } .green { background: #61c555; }
.title { display: flex; margin-left: 1056px; font-weight: 700; font-size: 25px; color: #2a2a2a; line-height: 54px; }
.title svg { margin: 10px 11px 0 0; }
.fname { margin-right: 14px; }

.toolbar {
  height: 118px; flex: none; display: flex; border-bottom: 2px solid #6c6c6c;
  background: linear-gradient(#e6e6e6, #d0d0d0);
  font-size: 22px; font-weight: 400; -webkit-text-stroke: .25px;
}
.tool { display: flex; flex-direction: column; padding-top: 8px; flex: none; }
.tool span { line-height: 28px; margin-top: 6px; }
.new { margin-left: 37px; width: 109px; } .new span { margin-left: 10px; }
.folder { width: 117px; } .folder span { margin-left: 11px; }
.disk { width: 116px; } .disk span { margin-left: 14px; }
.print { width: 581px; } .print span { margin-left: 2px; }
.paste span { margin-left: 10px; color: #8a8a8a; }
.order { margin-left: auto; width: 100px; } .order span { margin-left: 0; }

.lengthbar {
  height: 44px; flex: none; border-bottom: 2px solid #acacac; display: flex; justify-content: flex-end;
  padding-right: 16px; line-height: 46px; font-size: 23.500px; font-weight: 400; -webkit-text-stroke: .25px;
  background: linear-gradient(#fff, #ececec 45%, #f0f0f0 75%, #fcfcfc);
}
.dsicon { width: 24px; height: 8px; border-top: 3px solid #000; border-bottom: 3px solid #000; margin: 17px 16px 0 0; }

.body { height: 1470px; flex: none; display: flex; overflow: hidden; }
.side { width: 82px; flex: none; border-right: 2px solid #a9a9a9; background: linear-gradient(90deg, #fff, #f2f2f2 28px, #eaeaea); }
.center { width: 2002px; flex: none; display: flex; flex-direction: column; }
.seqwrap { flex: 1; display: flex; min-height: 0; }
.seq { width: 1971px; height: 1380px; overflow: hidden; background: #fffcf5; }
.row text { stroke: #000; stroke-width: .45px; }
.mono { font-family: "DejaVu Sans Mono", "Liberation Mono", monospace; letter-spacing: 4.347px; }
.row .mono text { stroke-width: .8px; }
.prime { letter-spacing: 0; }
.track { width: 31px; background: #fafafa; border-left: 2px solid #e6e6e6; flex: none; }
.thumb { display: block; width: 16px; height: 119px; margin: 2px 0 0 7px; border-radius: 8px; background: #c1c1c1; }

.panel { flex: 1; min-width: 0; border-left: 2px solid #b0b0b0; display: flex; }
.panel > .track { width: 31px; }
.panel > .track .thumb { height: 348px; }
.form { flex: 1; min-width: 0; padding: 37px 0 0 32px; background: #ebebeb; font-weight: 400; -webkit-text-stroke: .3px; }
.form span { display: inline-block; }
.label { height: 32px; line-height: 33px; }
.blue { color: #0a69d3; }
.select {
  height: 40px; background: #fff; border-radius: 10px; display: flex; justify-content: space-between; align-items: center;
  line-height: 42px; padding-right: 4px; box-shadow: 0 0 0 1px rgba(0, 0, 0, .08), 0 1.500px 2px rgba(0, 0, 0, .28);
}
.step { display: block; width: 32px; height: 32px; border-radius: 7px; background: linear-gradient(#4b97fc, #2876f5); }
.step path { fill: none; stroke: #fff; stroke-width: 3.400px; stroke-linecap: round; stroke-linejoin: round; }
.natural { width: 272px; margin-left: 6px; padding-left: 16px; }
.group { width: 688px; height: 264px; margin-top: 29px; border: 2px solid #dadada; border-radius: 10px; background: #e4e4e4; padding: 29px 36px 0 34px; }
.group .label { margin-left: 0; }
.combo1 { width: 612px; margin: 6px 0 0 2px; padding-left: 3px; line-height: 38px; }
.combo1 span { height: 40px; }
.second { margin-top: 41px; }
.combo2 { margin-top: 3px; width: 614px; padding-left: 15px; }
.desc { margin-top: 43px; height: 31px; }
.textbox {
  width: 688px; background: #fff; border: 2px solid #bcbcbc; border-top-color: #8e8e8e; padding: 9px 0 0 8px;
  font-family: "DejaVu Sans", sans-serif; font-weight: 400; font-size: 25px; line-height: 32px;
  -webkit-text-stroke: .45px;
}
.textbox div { height: 32px; white-space: nowrap; }
.short { height: 120px; }
.cols { display: flex; }
.cols > div { width: 328px; margin-right: 30px; }
.dates { margin-top: 41px; }
.nums { margin-top: 40px; }
.input { height: 40px; width: 327px; margin: 1px 0 0 1px; background: #fff; border: 1px solid #d6d6d6; border-bottom: 2px solid #b9b9b9; padding-left: 2px; line-height: 38px; }
.author { margin-top: 41px; }
.combo3 { width: 684px; margin: 6px 0 0 2px; }
.comm { margin-top: 42px; height: 31px; }
.long { height: 560px; }
.split { display: flex; gap: 10px; }
.textbox .meta { margin-top: 24px; padding-left: 1px; }
.provider { display: flex; padding-left: 1px; }
.provider span:nth-child(2) { margin-left: 83px; }
.provider span:nth-child(3) { margin-left: 14px; }

.footer { height: 62px; flex: none; border-top: 2px solid #adadad; background: #ebebeb; display: flex; font-weight: 400; font-size: 25px; -webkit-text-stroke: .3px; }
.lens { margin: 14px 0 0 14px; }
.panes { margin: 14px 0 0 14px; }
.tabs { display: flex; width: 852px; height: 42px; margin: 8px 0 0 12px; border-radius: 11px; background: #dfdfdf; line-height: 42px; }
.tab { display: flex; padding-left: 20px; position: relative; }
.t1 { width: 98px; }
.t2 { width: 166px; margin: 1px 0; background: #fff; border-radius: 10px; box-shadow: 0 1px 3px rgba(0, 0, 0, .3); }
.t3 { width: 160px; padding-left: 28px; }
.t4 { width: 153px; padding-left: 24px; }
.t5 { width: 144px; padding-left: 26px; }
.t6 { padding-left: 24px; }
.line::before { content: ""; position: absolute; left: 0; top: 9px; width: 2px; height: 24px; background: #c9c9c9; }
.check { display: flex; margin-left: auto; line-height: 62px; }
.check svg { margin: 16px 9px 0 0; }
.grip { margin: 34px 0 0 54px; }

.popup {
  position: absolute; border-radius: 12px; padding: 9px; color: #f3f3f3; font-weight: 500;
  border: 1px solid #9a9a9b; box-shadow: 0 0 0 1px #1c1c1e, 0 14px 44px 4px rgba(0, 0, 0, .36);
}
.edit {
  left: 439px; top: 50px; width: 505px; height: 1054px; border-radius: 8px 8px 12px 12px; padding-left: 8px;
  background: linear-gradient(#6d6c70 0, #6c6c70 20%, #706e6d 34%, #69696b 46%, #69696b 53%, #7c7773 69%, #7a7470 74%, #6c6b6b 86%, #67686c 93%, #626267);
}
.find { left: 935px; top: 996px; width: 556px; height: 262px; background: linear-gradient(#65605d, #6f6965 45%, #736c68); padding: 9px 8px; }
.item { display: flex; align-items: center; height: 44px; line-height: 48px; padding: 0 18px; border-radius: 8px; }
.item span { position: relative; top: 1px; }
.edit .active { background: #808080; }
.find .active { background: #4b7fe0; color: #fff; }
.off { color: #aaa9a9; }
.off .tube { opacity: .6; }
.tube { margin: 0 16px 0 3px; }
.chev { margin-left: auto; }
.chev path { fill: none; stroke: #fff; stroke-width: 3.600px; stroke-linecap: round; stroke-linejoin: round; }
.keys { margin-left: auto; display: flex; color: #a6a5a5; font-weight: 400; height: 44px; line-height: 44px; }
.find .active .keys { color: #fff; }
.keys i { width: 19px; display: flex; justify-content: center; }
.find .keys i { width: 14px; }
.keys .mod, .find .keys .mod, .find .keys .ctrl { width: 26px; }
.keys .mod { font-size: 27px; font-weight: 500; }
.sep { height: 2px; margin: 10px 18px; background: rgba(255, 255, 255, .22); }
</style>
